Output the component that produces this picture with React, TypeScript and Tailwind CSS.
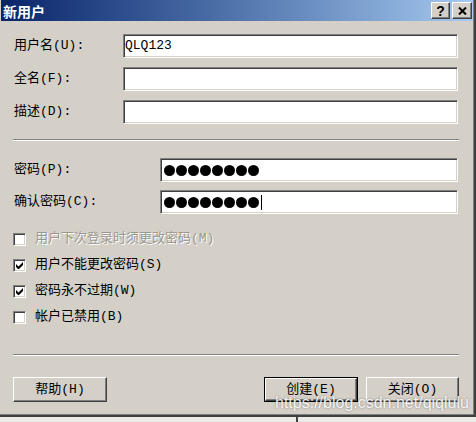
import React from 'react';

const sunken =
  'bg-white border border-t-[#808080] border-l-[#808080] border-b-white border-r-white shadow-[inset_1px_1px_0_#404040,inset_-1px_-1px_0_#d4d0c8]';
const raised =
  'bg-[#d4d0c8] border border-t-white border-l-white border-b-[#404040] border-r-[#404040] shadow-[inset_-1px_-1px_0_#808080,inset_1px_1px_0_#d4d0c8]';

const Dots = ({ n, caret }: { n: number; caret?: boolean }) => (
  <div className="flex items-center h-full pl-[3px]">
    {Array.from({ length: n }).map((_, i) => (
      <span key={i} className="w-[11px] h-[11px] rounded-full bg-black mr-[1px]" />
    ))}
    {caret && <span className="w-[1px] h-[15px] bg-black ml-[1px]" />}
  </div>
);

const Check = ({ checked, disabled, label }: { checked?: boolean; disabled?: boolean; label: string }) => (
  <div className="h-[26px] flex items-center pl-[12px]">
    <div className={`w-[13px] h-[13px] flex items-center justify-center ${sunken} ${disabled ? 'bg-[#d4d0c8]' : ''}`}>
      {checked && (
        <svg width="7" height="7" viewBox="0 0 7 7">
          <path d="M0 2v3l2 2h1l4-4V0L2.5 4.5z" fill="#000" />
        </svg>
      )}
    </div>
    <span
      className={`ml-[9px] ${disabled ? 'text-[#9a978f] [text-shadow:1px_1px_0_#ffffff]' : 'text-black'}`}
    >
      {label}
    </span>
  </div>
);

const Button = ({ label }: { label: string }) => (
  <div className={`w-full h-full flex items-center justify-center ${raised}`}>{label}</div>
);

export default function App() {
  return (
    <div className="w-[476px] h-[422px] bg-[#ecebe8] relative overflow-hidden font-['Liberation_Mono','Noto_Sans_CJK_SC',monospace] text-[13px] text-black">
      <div className="h-[417px] border-r-2 border-b-2 border-[#404040]">
        <div className="h-full flex flex-col bg-[#d4d0c8] border-r border-b border-[#808080] pl-[1px]">
          {/* title bar */}
          <div className="h-[21px] flex items-center bg-gradient-to-r from-[#0a246a] to-[#a6caf0]">
            <span className="ml-[2px] text-white font-bold text-[14px] font-['Noto_Sans_CJK_SC',sans-serif] leading-none">
              新用户
            </span>
            <div className="ml-auto flex gap-[2px] mr-[1px]">
              <div className={`w-[19px] h-[17px] flex items-center justify-center ${raised}`}>
                <span className="font-['Liberation_Sans',sans-serif] font-bold text-[14px] leading-none">?</span>
              </div>
              <div className={`w-[20px] h-[17px] flex items-center justify-center ${raised}`}>
                <svg width="9" height="8" viewBox="0 0 9 8">
                  <path d="M1 0.5l7 7M8 0.5l-7 7" stroke="#000" strokeWidth="2" />
                </svg>
              </div>
            </div>
          </div>

          {/* name fields */}
          <div className="mt-[13px] flex flex-col gap-[9px]">
            {[
              ['用户名(U):', 'QLQ123'],
              ['全名(F):', ''],
              ['描述(D):', ''],
            ].map(([label, value]) => (
              <div key={label} className="flex items-center h-[24px]">
                <span className="w-[122px] shrink-0 pl-[13px]">{label}</span>
                <div className={`w-[335px] h-[24px] flex items-center pl-[1px] ${sunken}`}>{value}</div>
              </div>
            ))}
          </div>

          <div className="mt-[15px] ml-[12px] w-[446px] border-t border-t-[#808080] border-b border-b-white" />

          {/* passwords */}
          <div className="mt-[17px] flex flex-col gap-[8px]">
            <div className="flex items-center h-[24px]">
              <span className="w-[159px] shrink-0 pl-[13px]">密码(P):</span>
              <div className={`w-[298px] h-[24px] ${sunken}`}>
                <Dots n={8} />
              </div>
            </div>
            <div className="flex items-center h-[24px]">
              <span className="w-[159px] shrink-0 pl-[13px]">确认密码(C):</span>
              <div className={`w-[298px] h-[24px] ${sunken}`}>
                <Dots n={8} caret />
              </div>
            </div>
          </div>

          {/* options */}
          <div className="mt-[12px] flex flex-col">
            <Check disabled label="用户下次登录时须更改密码(M)" />
            <Check checked label="用户不能更改密码(S)" />
            <Check checked label="密码永不过期(W)" />
            <Check label="帐户已禁用(B)" />
          </div>

          <div className="mt-[24px] ml-[12px] w-[446px] border-t border-t-[#808080] border-b border-b-white" />

          {/* buttons */}
          <div className="mt-[21px] flex h-[25px] pl-[12px]">
            <div className="w-[94px] h-full">
              <Button label="帮助(H)" />
            </div>
            <div className="ml-[157px] w-[94px] h-full border border-black">
              <Button label="创建(E)" />
            </div>
            <div className="ml-[8px] w-[93px] h-full">
              <Button label="关闭(O)" />
            </div>
          </div>
        </div>
      </div>

      {/* window behind */}
      <div className="absolute left-[296px] top-[417px] w-[2px] h-[5px] bg-[#404040]" />

      {/* watermark */}
      <span className="absolute left-[275px] top-[394px] leading-[18px] text-[16px] font-['Liberation_Sans',sans-serif] text-white/90 [text-shadow:0_0_2px_rgba(0,0,0,0.45)]">
        https://blog.csdn.net/qiqlulu
      </span>
    </div>
  );
}
